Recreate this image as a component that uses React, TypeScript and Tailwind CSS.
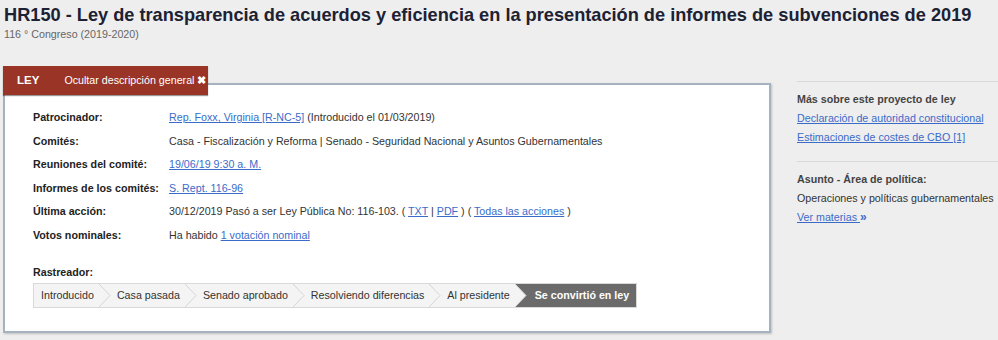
import React from 'react';

const Link: React.FC<{ children: React.ReactNode }> = ({ children }) => (
  <a href="#" className="text-[#3b6bc9] underline">
    {children}
  </a>
);

const steps = [
  'Introducido',
  'Casa pasada',
  'Senado aprobado',
  'Resolviendo diferencias',
  'Al presidente',
];

// Chevron separator between tracker steps
const Chevron: React.FC<{ next: string }> = ({ next }) => (
  <svg width="12" height="23" viewBox="0 0 12 23" className="shrink-0 block">
    <rect x="0" y="0" width="12" height="23" fill={next} />
    <polygon points="0,0 11,11.5 0,23" fill="#f4f4f4" />
    <polyline points="0,0 11,11.5 0,23" fill="none" stroke="#d4d4d4" strokeWidth="1" />
  </svg>
);

export default function App() {
  const details = [
    {
      label: 'Patrocinador:',
      value: (
        <>
          <Link>Rep. Foxx, Virginia [R-NC-5]</Link> (Introducido el 01/03/2019)
        </>
      ),
    },
    {
      label: 'Comités:',
      value: 'Casa - Fiscalización y Reforma | Senado - Seguridad Nacional y Asuntos Gubernamentales',
    },
    { label: 'Reuniones del comité:', value: <Link>19/06/19 9:30 a. M.</Link> },
    { label: 'Informes de los comités:', value: <Link>S. Rept. 116-96</Link> },
    {
      label: 'Última acción:',
      value: (
        <>
          30/12/2019 Pasó a ser Ley Pública No: 116-103. ( <Link>TXT</Link> | <Link>PDF</Link> ) ({' '}
          <Link>Todas las acciones</Link> )
        </>
      ),
    },
    {
      label: 'Votos nominales:',
      value: (
        <>
          Ha habido <Link>1 votación nominal</Link>
        </>
      ),
    },
  ];

  return (
    <div className="w-[998px] h-[340px] overflow-hidden bg-[#eeeeee] font-['Liberation_Sans',Arial,sans-serif] text-[10.7px] text-[#333]">
      {/* Header */}
      <div className="pl-[4px] pt-[5px]">
        <h1 className="text-[18.2px] leading-[21px] font-bold text-[#1c2133] whitespace-nowrap">
          HR150 - Ley de transparencia de acuerdos y eficiencia en la presentación de informes de subvenciones de 2019
        </h1>
        <p className="text-[10.7px] leading-[14px] text-[#666] mt-[1px]">116 ° Congreso (2019-2020)</p>
      </div>

      <div className="flex mt-[25px] pl-[3px]">
        {/* Main column */}
        <div className="w-[768px] shrink-0 flex flex-col">
          <div className="relative z-10 -mb-[12px] flex items-center h-[29px] w-[205px] bg-[#993426] shadow-[0_1px_1px_rgba(0,0,0,0.4)] text-white whitespace-nowrap">
            <span className="pl-[14px] font-bold text-[11.5px]">LEY</span>
            <span className="pl-[25px]">Ocultar descripción general</span>
            <span className="pl-[3px] font-bold">✖</span>
          </div>
          <div className="bg-white border-2 border-[#a6b3bf] shadow-[1px_1px_2px_rgba(0,0,0,0.2)] h-[250px] pl-[28px] pt-[26px]">
            <div className="flex flex-col gap-[10px]">
              {details.map((d) => (
                <div key={d.label} className="flex leading-[13.5px] whitespace-nowrap">
                  <span className="w-[136px] shrink-0 font-bold text-[#222]">{d.label}</span>
                  <span>{d.value}</span>
                </div>
              ))}
            </div>
            <div className="mt-[23px] font-bold text-[#222] leading-[14px]">Rastreador:</div>
            <div className="mt-[4px] flex w-fit border border-[#d9d9d9] h-[25px] text-[#333] whitespace-nowrap">
              {steps.map((s, i) => (
                <React.Fragment key={s}>
                  <div
                    className={`flex items-center h-[23px] bg-[#f4f4f4] ${i === 0 ? 'pl-[7px] pr-[5px]' : 'pl-[6px] pr-[5px]'}`}
                  >
                    {s}
                  </div>
                  <Chevron next={i === steps.length - 1 ? '#6b6b6b' : '#f4f4f4'} />
                </React.Fragment>
              ))}
              <div className="flex items-center h-[23px] bg-[#6b6b6b] text-white font-bold pl-[8px] pr-[7px]">
                Se convirtió en ley
              </div>
            </div>
          </div>
        </div>

        {/* Sidebar */}
        <div className="ml-[26px] flex-1 pt-[15px] whitespace-nowrap">
          <div className="border-t border-[#d8d8d8] pt-[8px] pb-[14px]">
            <div className="font-bold text-[#444] leading-[19px]">Más sobre este proyecto de ley</div>
            <div className="leading-[19px]">
              <Link>Declaración de autoridad constitucional</Link>
            </div>
            <div className="leading-[19px]">
              <Link>Estimaciones de costes de CBO [1]</Link>
            </div>
          </div>
          <div className="border-t border-[#d8d8d8] pt-[8px]">
            <div className="font-bold text-[#444] leading-[19px]">Asunto - Área de política:</div>
            <div className="leading-[19px]">Operaciones y políticas gubernamentales</div>
            <div className="leading-[19px]">
              <Link>Ver materias </Link>
              <span className="text-[#3b6bc9] font-bold text-[12px]">»</span>
            </div>
          </div>
        </div>
      </div>
    </div>
  );
}
